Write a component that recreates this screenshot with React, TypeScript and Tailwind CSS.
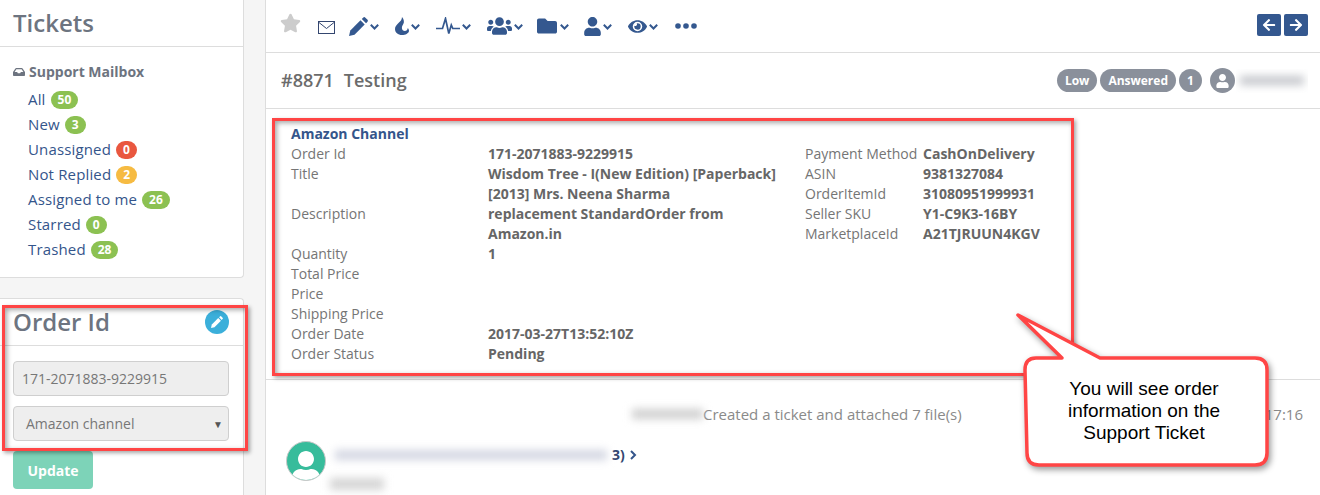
import React from "react";
import { FaStar, FaUsers, FaFolder, FaUser, FaEye, FaArrowLeft, FaArrowRight, FaInbox } from "react-icons/fa";

const Chev = () => (
  <svg viewBox="0 0 9 6" className="w-[9px] h-[6px] ml-[2px] mt-[2px]" fill="none" stroke="#34588f" strokeWidth="2">
    <path d="M.8 .8l3.700 3.700L8.200 .8" />
  </svg>
);

const Pencil = ({ className, fill }: { className?: string; fill: string }) => (
  <svg viewBox="0 0 19 19" className={className} fill={fill}>
    <path d="M0 19l1.300-5.500L11.500 3.300l4.200 4.200L5.500 17.700z" />
    <path d="M12.800 2l1.300-1.300a1.600 1.600 0 0 1 2.300 0l1.900 1.900a1.600 1.600 0 0 1 0 2.300L17 6.200z" />
  </svg>
);

const Flame = ({ className }: { className?: string }) => (
  <svg viewBox="0 0 14 18" className={className} fill="#34588f">
    <path d="M7 0C9 2.500 9.500 5 8.300 7 7.300 8.700 6.700 10 7 11.800 7.400 13.300 8.500 14 9.800 14 11.500 14 12.500 12.800 12.800 11 13.700 12 14 13 14 14 13.500 16.500 10.500 18 7 18 3 18 0 15.500 0 12 0 9.500 1.500 8 3 6.500 5 4.500 7 3 7 0Z" />
  </svg>
);

const Pulse = ({ className }: { className?: string }) => (
  <svg viewBox="0 0 24 18" className={className} fill="none" stroke="#34588f" strokeWidth="1.7">
    <path d="M0 11.500h6.500L9.500 1.500l3.300 15 2.500-8.500 1.500 3.500H24" />
  </svg>
);

const Envelope = ({ className }: { className?: string }) => (
  <svg viewBox="0 0 17 13" className={className} fill="none" stroke="#34466f" strokeWidth="1">
    <rect x=".5" y=".5" width="16" height="12" />
    <path d="M1 1.500l7.500 6 7.500-6" />
  </svg>
);

const Dots = ({ className }: { className?: string }) => (
  <svg viewBox="0 0 22 6" className={className} fill="#34588f">
    <circle cx="3" cy="3" r="2.800" />
    <circle cx="11" cy="3" r="2.800" />
    <circle cx="19" cy="3" r="2.800" />
  </svg>
);

const Badge = ({ c, children }: { c: string; children: React.ReactNode }) => (
  <span className={`inline-flex items-center justify-center h-[18px] min-w-[20px] px-[7px] rounded-full text-[12px] font-bold text-white leading-none tracking-normal ${c}`}>{children}</span>
);

const links: [string, string, string][] = [
  ["All", "50", "bg-[#8cc152]"],
  ["New", "3", "bg-[#8cc152]"],
  ["Unassigned", "0", "bg-[#e9573f]"],
  ["Not Replied", "2", "bg-[#f6bb42]"],
  ["Assigned to me", "26", "bg-[#8cc152]"],
  ["Starred", "0", "bg-[#8cc152]"],
  ["Trashed", "28", "bg-[#8cc152]"],
];

const left: [string, string[]][] = [
  ["Order Id", ["171-2071883-9229915"]],
  ["Title", ["Wisdom Tree - I(New Edition) [Paperback]", "[2013] Mrs. Neena Sharma"]],
  ["Description", ["replacement StandardOrder from", "Amazon.in"]],
  ["Quantity", ["1"]],
  ["Total Price", [""]],
  ["Price", [""]],
  ["Shipping Price", [""]],
  ["Order Date", ["2017-03-27T13:52:10Z"]],
  ["Order Status", ["Pending"]],
];

const right: [string, string][] = [
  ["Payment Method", "CashOnDelivery"],
  ["ASIN", "9381327084"],
  ["OrderItemId", "31080951999931"],
  ["Seller SKU", "Y1-C9K3-16BY"],
  ["MarketplaceId", "A21TJRUUN4KGV"],
];

export default function App() {
  return (
    <div className="relative w-[1320px] h-[495px] overflow-hidden flex bg-[#f5f5f5] font-['Open_Sans',sans-serif] text-[#6d7480]">
      {/* Sidebar */}
      <aside className="w-[266px] shrink-0 border-r border-[#dddddd] pr-[21px] flex flex-col">
        <section className="h-[278px] bg-white border-b border-r border-[#dddddd] rounded-br-[4px]">
          <h2 className="h-[47px] border-b border-[#dddddd] pl-[13px] text-[24px] leading-[46px] font-semibold">Tickets</h2>
          <div className="pl-[13px] pt-[16px] flex items-center gap-[4px] text-[14px] leading-[18px] font-bold">
            <FaInbox className="w-[12px] h-[12px]" />
            <span>Support Mailbox</span>
          </div>
          <ul className="pl-[28px] pt-[6px]">
            {links.map(([t, n, c]) => (
              <li key={t} className="h-[25px] flex items-center gap-[5px] text-[15px] tracking-[0.15px] text-[#34558b]">
                <span>{t}</span>
                <Badge c={c}>{n}</Badge>
              </li>
            ))}
          </ul>
        </section>
        <section className="mt-[20px] flex-1 bg-white border-t border-r border-[#dddddd] rounded-tr-[4px]">
          <div className="h-[47px] border-b border-[#dddddd] pl-[13px] pr-[14px] flex items-center justify-between">
            <h2 className="text-[24px] font-semibold leading-none">Order Id</h2>
            <span className="w-[24px] h-[24px] rounded-full bg-[#3bafda] flex items-center justify-center">
              <Pencil className="w-[12px] h-[12px]" fill="#ffffff" />
            </span>
          </div>
          <div className="pl-[13px] pr-[14px] pt-[15px]">
            <div className="h-[35px] border border-[#cfcfcf] rounded-[4px] bg-[#eeeeee] pl-[8px] flex items-center text-[14px] text-[#777777]">171-2071883-9229915</div>
            <div className="mt-[10px] h-[35px] border border-[#cfcfcf] rounded-[4px] bg-[#eeeeee] pl-[12px] pr-[5px] flex items-center justify-between text-[14px] text-[#777777]">
              <span>Amazon channel</span>
              <span className="text-[10px] leading-none text-[#555555]">▼</span>
            </div>
            <button className="mt-[10px] w-[80px] h-[38px] rounded-[4px] bg-[#7dd3b8] text-white text-[14px] font-bold">Update</button>
          </div>
        </section>
      </aside>

      {/* Main */}
      <main className="flex-1 bg-white flex flex-col">
        <div className="h-[53px] shrink-0 border-b border-[#dddddd] pl-[14px] pr-[12px] flex items-center justify-between">
          <div className="flex items-center">
            <FaStar className="w-[21px] h-[20px] text-[#cccccc] -mt-[6px]" />
            <Envelope className="w-[17px] h-[13px] ml-[17px] mt-[2px]" />
            <Pencil className="w-[19px] h-[19px] ml-[14px]" fill="#34588f" />
            <Chev />
            <Flame className="w-[14px] h-[18px] ml-[16px]" />
            <Chev />
            <Pulse className="w-[24px] h-[18px] ml-[16px]" />
            <Chev />
            <FaUsers className="w-[25px] h-[20px] ml-[16px] text-[#34588f]" />
            <Chev />
            <FaFolder className="w-[22px] h-[20px] ml-[13px] text-[#34588f]" />
            <Chev />
            <FaUser className="w-[17px] h-[19px] ml-[15px] text-[#34588f]" />
            <Chev />
            <FaEye className="w-[19px] h-[19px] ml-[16px] text-[#34588f]" />
            <Chev />
            <Dots className="w-[22px] h-[6px] ml-[17px]" />
          </div>
          <div className="flex gap-[3px] -mt-[2px]">
            <span className="w-[24px] h-[22px] rounded-[2px] bg-[#34588f] flex items-center justify-center"><FaArrowLeft className="w-[14px] h-[14px] text-white" /></span>
            <span className="w-[24px] h-[22px] rounded-[2px] bg-[#34588f] flex items-center justify-center"><FaArrowRight className="w-[14px] h-[14px] text-white" /></span>
          </div>
        </div>

        <div className="h-[56px] shrink-0 border-b border-[#dddddd] pl-[15px] pr-[12px] flex items-center justify-between text-[#6b6b6b]">
          <div className="text-[18px] font-semibold flex gap-[10px]"><span>#8871</span><span>Testing</span></div>
          <div className="flex items-center gap-[3px]">
            <span className="h-[23px] px-[8px] rounded-full bg-[#8a909b] text-white text-[12px] font-bold flex items-center">Low</span>
            <span className="h-[23px] px-[8px] rounded-full bg-[#8a909b] text-white text-[12px] font-bold flex items-center">Answered</span>
            <span className="w-[23px] h-[23px] rounded-full bg-[#8a909b] text-white text-[12px] font-bold flex items-center justify-center">1</span>
            <span className="w-[25px] h-[25px] ml-[5px] rounded-full bg-[#8a909b] flex items-center justify-center"><FaUser className="w-[13px] h-[14px] text-white" /></span>
            <span className="w-[72px] h-[24px] -ml-[2px] flex items-center overflow-hidden"><span className="block ml-[4px] w-[64px] h-[9px] bg-[#c4c6cb] blur-[4px]" /></span>
          </div>
        </div>

        <div className="h-[271px] shrink-0 border-b border-[#dddddd] pl-[25px] pt-[15px] text-[14px] leading-[20px] text-[#757575] flex">
          <div className="w-[514px]">
            <div className="font-bold text-[#34558b]">Amazon Channel</div>
            {left.map(([l, v]) => (
              <div key={l} className="flex">
                <span className="w-[197px] shrink-0">{l}</span>
                <div className="font-bold text-[#666666]">{v.map((x, i) => <div key={i} className="min-h-[20px]">{x}</div>)}</div>
              </div>
            ))}
          </div>
          <div className="pt-[20px]">
            {right.map(([l, v]) => (
              <div key={l} className="flex">
                <span className="w-[118px] shrink-0">{l}</span>
                <span className="font-bold text-[#666666]">{v}</span>
              </div>
            ))}
          </div>
        </div>

        <div className="flex-1">
          <div className="flex items-center h-[24px] mt-[22px] pl-[366px] pr-[17px] text-[15px] text-[#8a8a8a]">
            <span className="block w-[71px] h-[10px] bg-[#cfcfcf] blur-[4px]" />
            <span>Created a ticket and attached 7 file(s)</span>
            <span className="ml-auto">17:16</span>
          </div>
          <div className="flex items-start pl-[20px] mt-[15px]">
            <span className="w-[40px] h-[40px] rounded-full bg-[#37bc9b] border border-[#c9c9c9] flex items-end justify-center overflow-hidden"><FaUser className="w-[30px] h-[32px] -mb-[3px] text-white" /></span>
            <span className="block ml-[9px] mt-[9px] w-[272px] h-[10px] bg-[#d3d6e2] blur-[4px]" />
            <span className="ml-[5px] mt-[3px] text-[14px] font-bold text-[#34466f] flex items-center gap-[5px] leading-[22px]">3)
              <svg viewBox="0 0 7 10" className="w-[7px] h-[10px]" fill="none" stroke="#34558b" strokeWidth="2"><path d="M1 1l4 4-4 4" /></svg>
            </span>
          </div>
          <span className="block ml-[64px] -mt-[3px] w-[54px] h-[12px] bg-[#d5d5d5] blur-[4px]" />
        </div>
      </main>

      {/* Annotation frames */}
      <div className="absolute left-[2px] top-[305px] w-[246px] h-[146px] border-[3px] border-[#ff4545] shadow-[2px_2px_4px_rgba(0,0,0,0.35),inset_2px_2px_5px_rgba(0,0,0,0.35)]" />
      <div className="absolute left-[272px] top-[118px] w-[802px] h-[258px] border-[3px] border-[#ff4545] shadow-[2px_2px_4px_rgba(0,0,0,0.35),inset_2px_2px_5px_rgba(0,0,0,0.35)]" />

      {/* Callout */}
      <svg className="absolute left-[1000px] top-[300px] w-[290px] h-[190px] drop-shadow-[2px_3px_3px_rgba(0,0,0,0.4)]" viewBox="0 0 290 190">
        <path d="M36 58H62L18 15L100 58H255Q267 58 267 70V153Q267 165 255 165H39Q27 165 27 153L25 70Q25 58 36 58Z" fill="#fff" stroke="#ff4545" strokeWidth="3.500" strokeLinejoin="round" />
      </svg>
      <div className="absolute left-[1034px] top-[378px] w-[220px] text-center text-[19px] leading-[22px] text-black font-['Liberation_Sans',sans-serif]">
        You will see order<br />information on the<br />Support Ticket
      </div>
    </div>
  );
}
